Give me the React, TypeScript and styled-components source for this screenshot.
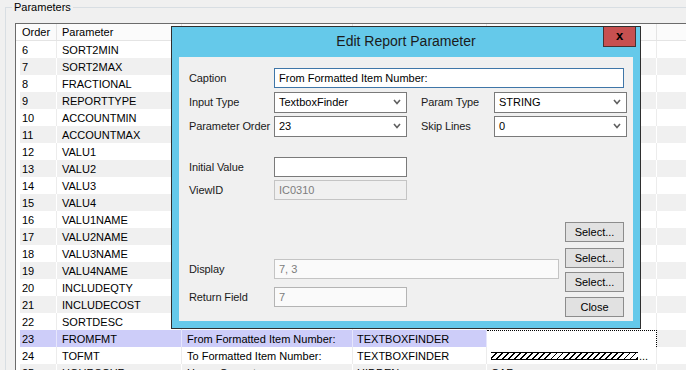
import React from 'react';
import styled, { createGlobalStyle } from 'styled-components';

const GlobalStyle = createGlobalStyle`
  html, body {
    margin: 0;
    padding: 0;
    background: #f0f0f0;
    overflow: hidden;
  }
  body {
    font-family: "Liberation Sans", Arial, sans-serif;
    font-size: 11px;
    color: #000;
  }
`;

const Page = styled.div`
  position: relative;
  width: 686px;
  height: 370px;
  overflow: hidden;
  background: #f0f0f0;
`;

const GroupBox = styled.fieldset`
  margin: 0 0 0 5px;
  padding: 9px 0 0 9px;
  border: 1px solid #d8dee3;
  border-right: none;
  border-bottom: none;
  width: 760px;
  box-sizing: border-box;
  min-inline-size: 0;
`;

const Legend = styled.legend`
  padding: 0 2px;
  margin-left: -3px;
  font-size: 11px;
  line-height: 14px;
  color: #000;
`;

const Grid = styled.div`
  border-top: 1px solid #6b6b6b;
  border-left: 1px solid #6b6b6b;
  background: #fff;
`;

const Row = styled.div<{ $header?: boolean }>`
  display: flex;
  height: 17px;
  box-sizing: border-box;
  ${(p) => (p.$header ? 'border-bottom: 1px solid #e4e4e4; background: #fbfbfb;' : '')}
`;

const Stub = styled.div`
  flex: 0 0 4px;
  background: #fff;
`;

const Cell = styled.div<{ $w: number; $pad: number; $bg: string; $line: string; $focus?: boolean }>`
  flex: 0 0 ${(p) => p.$w}px;
  box-sizing: border-box;
  padding-left: ${(p) => p.$pad}px;
  background: ${(p) => p.$bg};
  border-right: 1px ${(p) => (p.$focus ? 'dotted #000' : `solid ${p.$line}`)};
  ${(p) => (p.$focus ? 'border-top: 1px dotted #000;' : '')}
  white-space: nowrap;
  overflow: hidden;
  line-height: 16px;
  font-size: 11px;
  color: #000;
  display: flex;
  align-items: center;
`;

const Hatch = styled.span`
  display: inline-block;
  width: 147px;
  height: 8px;
  box-sizing: border-box;
  border-top: 1px solid #000;
  border-bottom: 1px solid #000;
  background: repeating-linear-gradient(135deg, transparent 0 3px, #000 3px 4.3px);
`;

const Ellipsis = styled.span`
  margin-left: 1px;
  line-height: 16px;
`;

/* ---------- Dialog ---------- */

const Dialog = styled.div`
  position: absolute;
  left: 171px;
  top: 26px;
  width: 470px;
  height: 303px;
  box-sizing: border-box;
  border: 1px solid #2f2f2f;
  background: #65c9ea;
  display: flex;
  flex-direction: column;
  padding: 0 7px 7px 7px;
`;

const TitleBar = styled.div`
  position: relative;
  flex: 0 0 30px;
  margin: 0 -7px;
  display: flex;
  align-items: center;
  justify-content: center;
  padding-bottom: 2px;
  box-sizing: border-box;
  font-size: 14px;
  color: #1b1b1b;
`;

const CloseButton = styled.div`
  position: absolute;
  right: 4px;
  top: 0;
  width: 33px;
  height: 20px;
  box-sizing: border-box;
  background: #c75050;
  border: 1px solid #4a3030;
  border-top: none;
  display: flex;
  align-items: center;
  justify-content: center;
  font-weight: bold;
  font-size: 13px;
  line-height: 13px;
  color: #000;
  padding-bottom: 2px;
`;

const Client = styled.div`
  flex: 1;
  background: #f0f0f0;
  padding: 11px 0 0 10px;
  display: flex;
  flex-direction: column;
`;

const FormRow = styled.div<{ $mt?: number }>`
  display: flex;
  align-items: center;
  height: 20px;
  margin-top: ${(p) => p.$mt ?? 0}px;
`;

const Label = styled.div<{ $w: number; $ml?: number }>`
  flex: 0 0 ${(p) => p.$w}px;
  margin-left: ${(p) => p.$ml ?? 0}px;
  font-size: 11px;
  color: #1a1a1a;
  white-space: nowrap;
  letter-spacing: -0.1px;
`;

const TextBox = styled.div<{ $w: number; $border: string; $bg: string; $color: string }>`
  width: ${(p) => p.$w}px;
  height: 20px;
  box-sizing: border-box;
  border: 1px solid ${(p) => p.$border};
  background: ${(p) => p.$bg};
  color: ${(p) => p.$color};
  padding-left: 4px;
  font-size: 11px;
  line-height: 18px;
  white-space: nowrap;
  overflow: hidden;
`;

const Combo = styled.div<{ $w: number }>`
  width: ${(p) => p.$w}px;
  height: 21px;
  box-sizing: border-box;
  border: 1px solid #7a7a7a;
  background: #fff;
  padding: 0 5px 0 4px;
  display: flex;
  align-items: center;
  justify-content: space-between;
  font-size: 11px;
  color: #000;
`;

const Lower = styled.div`
  display: flex;
`;

const LeftCol = styled.div`
  display: flex;
  flex-direction: column;
`;

const ButtonCol = styled.div`
  display: flex;
  flex-direction: column;
  margin-left: 6px;
  margin-top: 86px;
`;

const Button = styled.div<{ $mt?: number }>`
  width: 59px;
  height: 20px;
  box-sizing: border-box;
  margin-top: ${(p) => p.$mt ?? 0}px;
  border: 1px solid #8c8c8c;
  background: #e1e1e1;
  display: flex;
  align-items: center;
  justify-content: center;
  font-size: 11px;
  color: #000;
`;

const Chevron = () => (
  <svg width="8" height="6" viewBox="0 0 8 6">
    <polyline points="1,1 4,4.5 7,1" fill="none" stroke="#606060" strokeWidth="1.6" />
  </svg>
);

type RowData = {
  order: string;
  name: string;
  caption?: string;
  kind?: string;
  extra?: React.ReactNode;
  selected?: boolean;
};

const names = [
  'SORT2MIN', 'SORT2MAX', 'FRACTIONAL', 'REPORTTYPE', 'ACCOUNTMIN', 'ACCOUNTMAX',
  'VALU1', 'VALU2', 'VALU3', 'VALU4', 'VALU1NAME', 'VALU2NAME', 'VALU3NAME',
  'VALU4NAME', 'INCLUDEQTY', 'INCLUDECOST', 'SORTDESC',
];

const rows: RowData[] = [
  ...names.map((n, i) => ({ order: String(6 + i), name: n })),
  { order: '23', name: 'FROMFMT', caption: 'From Formatted Item Number:', kind: 'TEXTBOXFINDER', selected: true },
  {
    order: '24', name: 'TOFMT', caption: 'To Formatted Item Number:', kind: 'TEXTBOXFINDER',
    extra: (
      <>
        <Hatch />
        <Ellipsis>...</Ellipsis>
      </>
    ),
  },
  { order: '25', name: 'HOURSCUR', caption: 'Hours Current', kind: 'HIDDEN', extra: 'CAR' },
];

const COLS = [
  { w: 37, pad: 2 },
  { w: 125, pad: 5 },
  { w: 171, pad: 5 },
  { w: 134, pad: 4 },
  { w: 170, pad: 4 },
  { w: 120, pad: 4 },
];

const LAVENDER = '#cdcdf9';

function GridRow({ r, index }: { r: RowData; index: number }) {
  const alt = index % 2 === 1;
  const base = alt ? '#f0f0f0' : '#ffffff';
  const line = alt ? '#ffffff' : '#ececec';
  const values: React.ReactNode[] = [r.order, r.name, r.caption ?? '', r.kind ?? '', r.extra ?? '', ''];
  return (
    <Row>
      <Stub />
      {COLS.map((c, ci) => {
        let bg = base;
        let ln = line;
        let focus = false;
        if (r.selected && ci < 4) {
          bg = LAVENDER;
          ln = '#e6e6fc';
        }
        if (r.selected && ci === 4) {
          bg = '#ffffff';
          focus = true;
        }
        return (
          <Cell key={ci} $w={c.w} $pad={c.pad} $bg={bg} $line={ln} $focus={focus}>
            {values[ci]}
          </Cell>
        );
      })}
    </Row>
  );
}

export default function App() {
  const headers = ['Order', 'Parameter', '', '', '', ''];
  return (
    <>
      <GlobalStyle />
      <Page>
        <GroupBox>
          <Legend>Parameters</Legend>
          <Grid>
            <Row $header>
              <Stub />
              {COLS.map((c, ci) => (
                <Cell key={ci} $w={c.w} $pad={c.pad} $bg="#fbfbfb" $line="#e4e4e4">
                  {headers[ci]}
                </Cell>
              ))}
            </Row>
            {rows.map((r, i) => (
              <GridRow key={r.order} r={r} index={i} />
            ))}
          </Grid>
        </GroupBox>

        <Dialog>
          <TitleBar>
            Edit Report Parameter
            <CloseButton>x</CloseButton>
          </TitleBar>
          <Client>
            <FormRow>
              <Label $w={85}>Caption</Label>
              <TextBox $w={350} $border="#3f76a8" $bg="#fff" $color="#000">
                From Formatted Item Number:
              </TextBox>
            </FormRow>
            <FormRow $mt={4}>
              <Label $w={85}>Input Type</Label>
              <Combo $w={133}>
                TextboxFinder
                <Chevron />
              </Combo>
              <Label $w={73} $ml={14}>Param Type</Label>
              <Combo $w={133}>
                STRING
                <Chevron />
              </Combo>
            </FormRow>
            <FormRow $mt={4}>
              <Label $w={85}>Parameter Order</Label>
              <Combo $w={133}>
                23
                <Chevron />
              </Combo>
              <Label $w={73} $ml={14}>Skip Lines</Label>
              <Combo $w={133}>
                0
                <Chevron />
              </Combo>
            </FormRow>
            <Lower>
              <LeftCol>
                <FormRow $mt={21}>
                  <Label $w={85}>Initial Value</Label>
                  <TextBox $w={133} $border="#7a7a7a" $bg="#fff" $color="#000" />
                </FormRow>
                <FormRow $mt={3}>
                  <Label $w={85}>ViewID</Label>
                  <TextBox $w={133} $border="#c4c4c4" $bg="#f0f0f0" $color="#7d7d7d">
                    IC0310
                  </TextBox>
                </FormRow>
                <FormRow $mt={59}>
                  <Label $w={85}>Display</Label>
                  <TextBox $w={285} $border="#c4c4c4" $bg="#fafafa" $color="#7d7d7d">
                    7, 3
                  </TextBox>
                </FormRow>
                <FormRow $mt={8}>
                  <Label $w={85}>Return Field</Label>
                  <TextBox $w={133} $border="#b4b4b4" $bg="#fafafa" $color="#7d7d7d">
                    7
                  </TextBox>
                </FormRow>
              </LeftCol>
              <ButtonCol>
                <Button>Select...</Button>
                <Button $mt={6}>Select...</Button>
                <Button $mt={4}>Select...</Button>
                <Button $mt={5}>Close</Button>
              </ButtonCol>
            </Lower>
          </Client>
        </Dialog>
      </Page>
    </>
  );
}
